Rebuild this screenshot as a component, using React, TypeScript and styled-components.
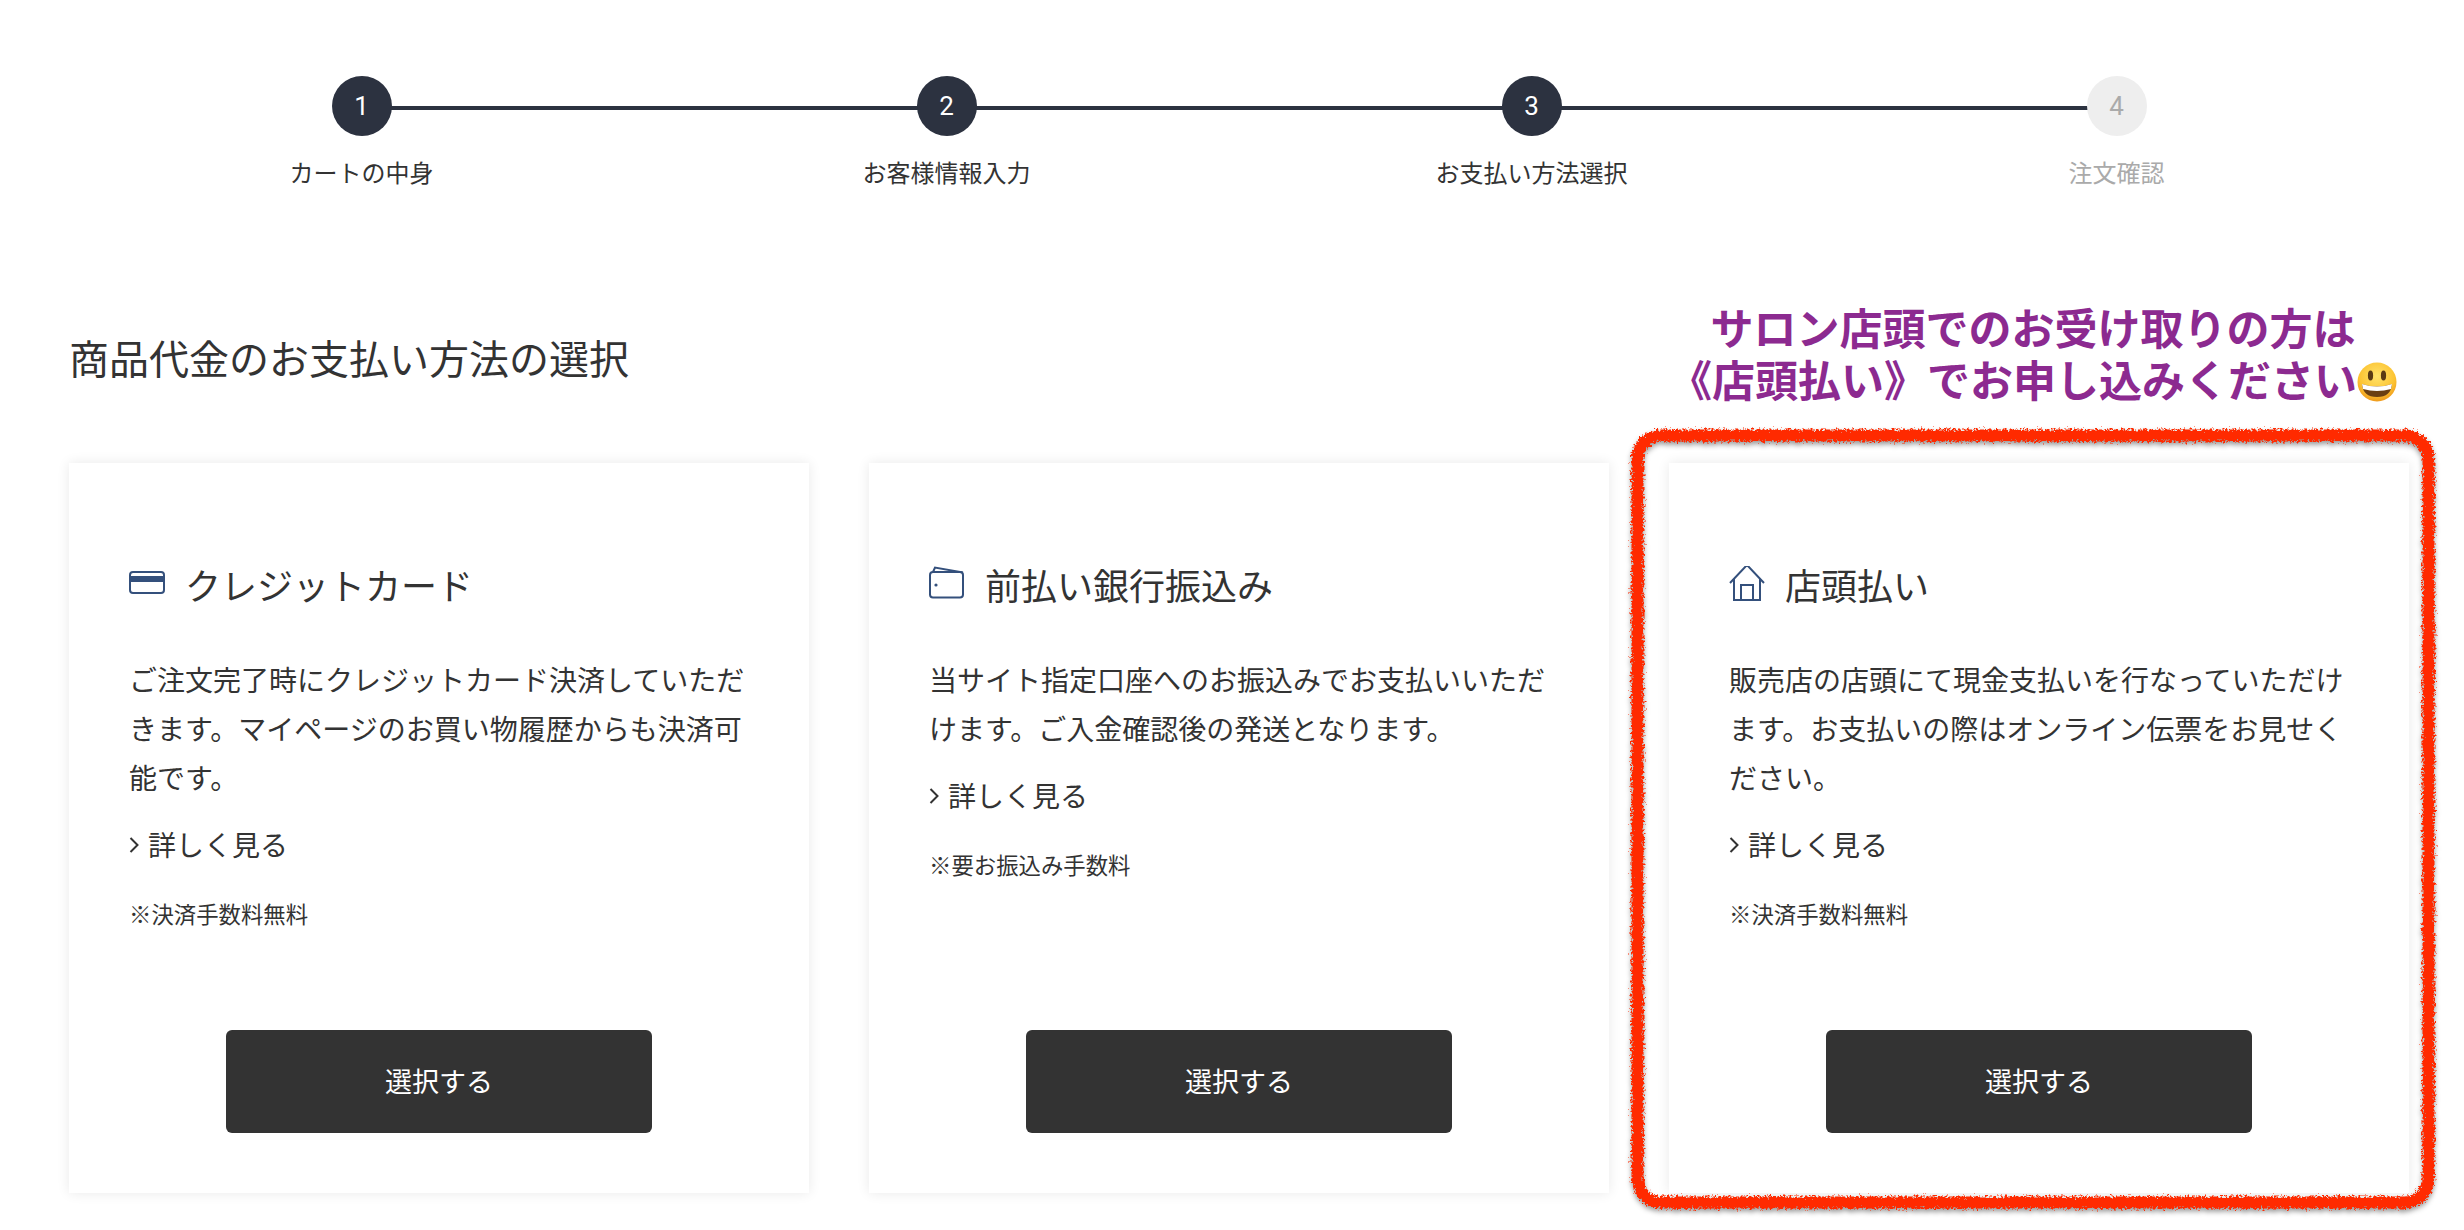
import React from "react";
import styled, { createGlobalStyle } from "styled-components";

const Global = createGlobalStyle`
  html, body { margin: 0; padding: 0; background: #fff; }
  body { font-family: "Noto Sans CJK JP", "Noto Sans", sans-serif; color: #333; overflow: hidden; }
  * { box-sizing: border-box; }
`;

const Page = styled.main`
  width: 2464px;
  height: 1230px;
  padding: 76px 55px 0 69px;
`;

const Steps = styled.ol`
  display: grid;
  grid-template-columns: repeat(4, 585px);
  margin: 0 0 108px;
  padding: 0;
  list-style: none;
`;

const Step = styled.li`
  position: relative;
  display: flex;
  flex-direction: column;
  align-items: center;
  &:not(:last-child)::after {
    content: "";
    position: absolute;
    left: 50%;
    top: 30px;
    width: 585px;
    height: 4px;
    background: #2c3240;
  }
`;

const Circle = styled.span<{ $done: boolean }>`
  position: relative;
  z-index: 1;
  width: 60px;
  height: 60px;
  border-radius: 50%;
  display: flex;
  align-items: center;
  justify-content: center;
  font-family: Roboto, sans-serif;
  font-size: 26px;
  background: ${(p) => (p.$done ? "#2c3240" : "#eeeeee")};
  color: ${(p) => (p.$done ? "#fff" : "#aaa")};
`;

const StepLabel = styled.span<{ $done: boolean }>`
  margin-top: 18px;
  font-size: 24px;
  line-height: 36px;
  color: ${(p) => (p.$done ? "#333" : "#aaa")};
`;

const HeadRow = styled.header`
  display: flex;
  justify-content: space-between;
  align-items: flex-end;
  height: 106px;
  margin-bottom: 59px;
`;

const Title = styled.h1`
  margin: 0 0 17px;
  font-size: 40px;
  line-height: 60px;
  font-weight: 400;
  color: #333;
`;

const Note = styled.p`
  width: 728px;
  margin: 0 12px 0 0;
  font-size: 43px;
  line-height: 52px;
  font-weight: 700;
  text-align: center;
  color: #8c2a90;
  white-space: nowrap;
`;

const Emoji = styled.svg`
  width: 40px;
  height: 40px;
  vertical-align: -5px;
`;

const Cards = styled.section`
  display: grid;
  grid-template-columns: repeat(3, 740px);
  column-gap: 60px;
`;

const Card = styled.article`
  position: relative;
  height: 730px;
  padding: 100px 60px 60px;
  display: flex;
  flex-direction: column;
  background: #fff;
  box-shadow: 0 0 12px rgba(0, 0, 0, 0.09);
`;

const CardTitle = styled.h2`
  display: flex;
  align-items: center;
  gap: 20px;
  margin: 0 0 50px;
  font-size: 36px;
  line-height: 42px;
  font-weight: 400;
  color: #333;
`;

const IconSvg = styled.svg`
  width: 36px;
  height: 36px;
  flex: none;
  fill: none;
  stroke: #34507c;
  stroke-width: 2;
`;

const Body = styled.p`
  margin: 0;
  font-size: 28px;
  line-height: 49px;
  color: #333;
`;

const More = styled.a`
  display: flex;
  align-items: center;
  gap: 9px;
  margin-top: 18px;
  font-size: 28px;
  line-height: 49px;
  color: #333;
`;

const Chevron = styled.svg`
  width: 10px;
  height: 18px;
  fill: none;
  stroke: #333;
  stroke-width: 2;
`;

const Fee = styled.p`
  margin: 27px 0 0;
  font-size: 22.4px;
  line-height: 34px;
  color: #333;
`;

const SelectButton = styled.button`
  align-self: center;
  margin-top: auto;
  width: 426px;
  height: 103px;
  padding-bottom: 3px;
  border: 0;
  border-radius: 6px;
  background: #333;
  color: #fff;
  font-family: inherit;
  font-size: 27px;
`;

const Sketch = styled.svg`
  position: absolute;
  left: -48px;
  top: -44px;
  width: 836px;
  height: 800px;
  overflow: visible;
  pointer-events: none;
`;

const CardIcon = () => (
  <IconSvg viewBox="0 0 36 36">
    <rect x="1" y="6" width="34" height="21" rx="3" />
    <rect x="1" y="10" width="34" height="6" fill="#34507c" stroke="none" />
  </IconSvg>
);

const WalletIcon = () => (
  <IconSvg viewBox="0 0 36 36">
    <rect x="1" y="6" width="33" height="25.5" rx="3" />
    <path d="M4 6 6 1.5 34 6.5" />
    <circle cx="7" cy="19" r="1.6" fill="#34507c" stroke="none" />
  </IconSvg>
);

const HomeIcon = () => (
  <IconSvg viewBox="0 0 36 36">
    <path d="M1 17 18 -1 35 17" />
    <path d="M5 13V34H31V13" />
    <path d="M12 34V19H24V34" />
  </IconSvg>
);

const SmileEmoji = () => (
  <Emoji viewBox="0 0 40 40">
    <defs>
      <radialGradient id="face" cx="50%" cy="35%" r="65%">
        <stop offset="0%" stopColor="#ffe36a" />
        <stop offset="70%" stopColor="#fcc332" />
        <stop offset="100%" stopColor="#ef9a1c" />
      </radialGradient>
    </defs>
    <circle cx="20" cy="20" r="19.5" fill="url(#face)" />
    <ellipse cx="13.5" cy="13.5" rx="2.6" ry="5" fill="#5a3a14" />
    <ellipse cx="26.5" cy="13.5" rx="2.6" ry="5" fill="#5a3a14" />
    <path d="M5 22Q20 27 35 22 34 35 20 35 6 35 5 22Z" fill="#6b3f12" />
    <path d="M5 22Q20 27 35 22L34 27Q20 31 6 27Z" fill="#fff" />
  </Emoji>
);

const RoughBorder = () => (
  <Sketch viewBox="0 0 836 800">
    <defs>
      <filter id="rough" x="-5%" y="-5%" width="110%" height="110%" colorInterpolationFilters="sRGB">
        <feTurbulence type="fractalNoise" baseFrequency="0.45" numOctaves="3" seed="4" result="n" />
        <feDisplacementMap in="SourceGraphic" in2="n" scale="9" xChannelSelector="R" yChannelSelector="G" result="d" />
        <feDropShadow in="d" dx="0" dy="3" stdDeviation="2.5" floodColor="#000" floodOpacity="0.4" />
      </filter>
    </defs>
    <rect x="16.5" y="16.5" width="791" height="767" rx="24" fill="none" stroke="#ff2a00" strokeWidth="12" filter="url(#rough)" />
  </Sketch>
);

const stepItems = [
  { n: 1, label: "カートの中身", done: true },
  { n: 2, label: "お客様情報入力", done: true },
  { n: 3, label: "お支払い方法選択", done: true },
  { n: 4, label: "注文確認", done: false },
];

const cardItems = [
  {
    icon: <CardIcon />,
    title: "クレジットカード",
    body: "ご注文完了時にクレジットカード決済していただきます。マイページのお買い物履歴からも決済可能です。",
    fee: "※決済手数料無料",
  },
  {
    icon: <WalletIcon />,
    title: "前払い銀行振込み",
    body: "当サイト指定口座へのお振込みでお支払いいただけます。ご入金確認後の発送となります。",
    fee: "※要お振込み手数料",
  },
  {
    icon: <HomeIcon />,
    title: "店頭払い",
    body: "販売店の店頭にて現金支払いを行なっていただけます。お支払いの際はオンライン伝票をお見せください。",
    fee: "※決済手数料無料",
    marked: true,
  },
];

export default function App() {
  return (
    <Page>
      <Global />
      <Steps>
        {stepItems.map((s) => (
          <Step key={s.n}>
            <Circle $done={s.done}>{s.n}</Circle>
            <StepLabel $done={s.done}>{s.label}</StepLabel>
          </Step>
        ))}
      </Steps>
      <HeadRow>
        <Title>商品代金のお支払い方法の選択</Title>
        <Note>
          サロン店頭でのお受け取りの方は
          <br />
          《店頭払い》でお申し込みください
          <SmileEmoji />
        </Note>
      </HeadRow>
      <Cards>
        {cardItems.map((c) => (
          <Card key={c.title}>
            <CardTitle>
              {c.icon}
              {c.title}
            </CardTitle>
            <Body>{c.body}</Body>
            <More>
              <Chevron viewBox="0 0 10 18">
                <path d="M1.5 2 8.5 9 1.5 16" />
              </Chevron>
              詳しく見る
            </More>
            <Fee>{c.fee}</Fee>
            <SelectButton>選択する</SelectButton>
            {c.marked && <RoughBorder />}
          </Card>
        ))}
      </Cards>
    </Page>
  );
}
